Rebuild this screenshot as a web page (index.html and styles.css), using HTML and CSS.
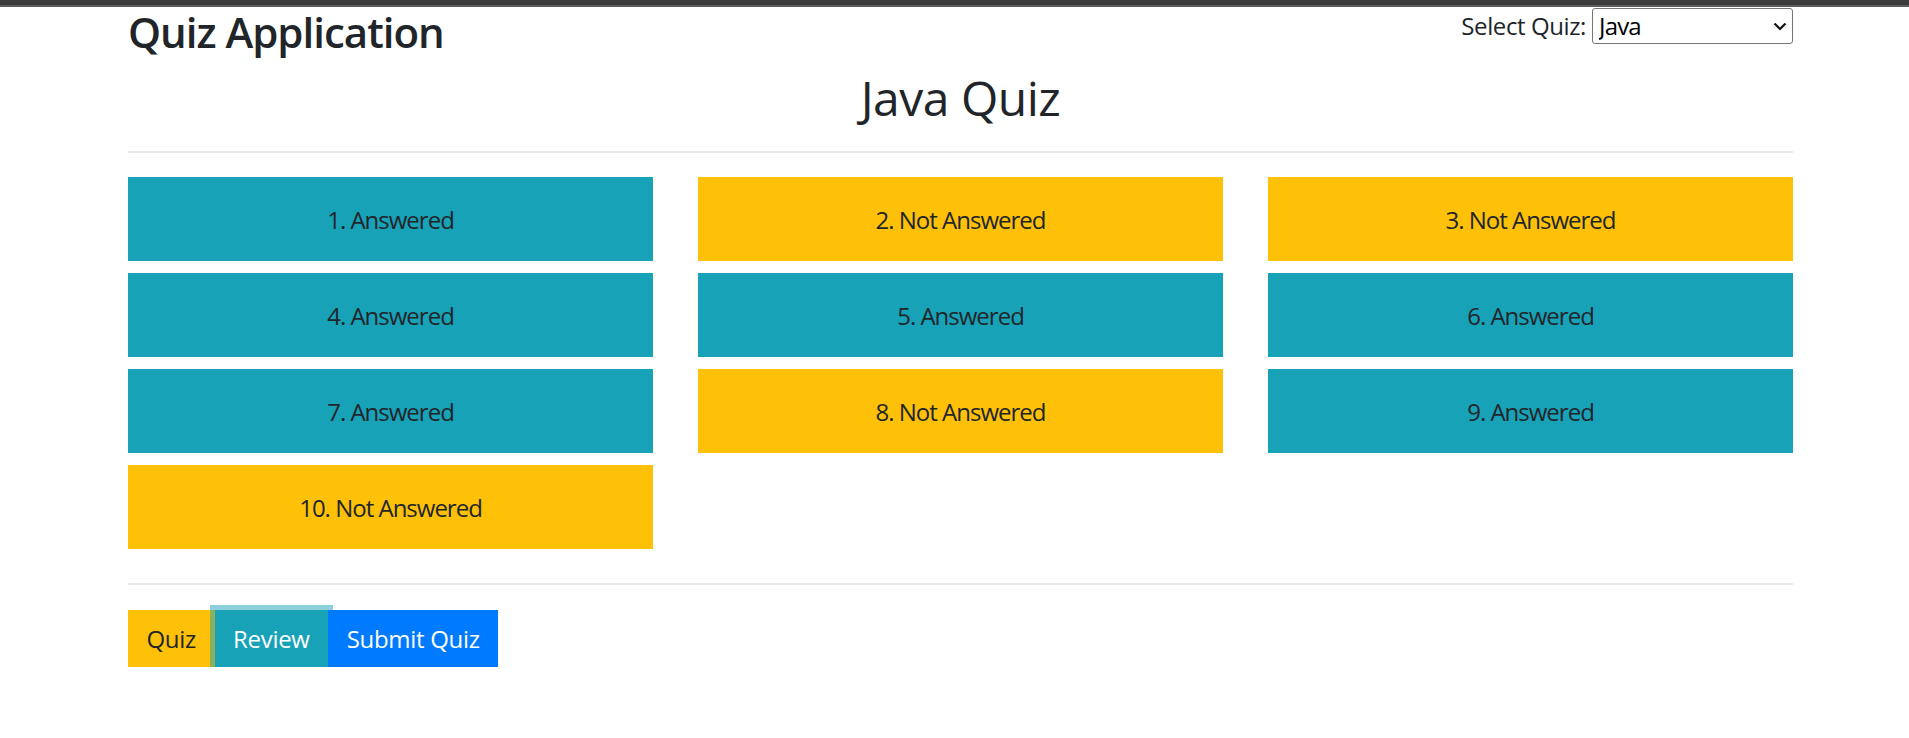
FILE: index.html
```html
<!DOCTYPE html>
<html lang="en">
<head>
<meta charset="utf-8">
<title>Quiz Application</title>
<link rel="stylesheet" href="styles.css">
</head>
<body>
<div class="topbar"></div>
<div class="container">
  <header class="header">
    <h3 class="app-title">Quiz Application</h3>
    <div class="quiz-select">
      <label class="select-label" for="quiz">Select Quiz:</label>
      <div class="select-wrap">
        <select id="quiz" class="select">
          <option>Java</option>
          <option>Python</option>
          <option>JavaScript</option>
        </select>
        <svg class="chevron" width="14" height="9" viewBox="0 0 14 9"><path d="M1.5 1.5 L7 7 L12.5 1.5" fill="none" stroke="#111" stroke-width="2.2"/></svg>
      </div>
    </div>
  </header>

  <h2 class="quiz-title">Java Quiz</h2>
  <hr class="rule">

  <div class="grid">
    <div class="cell answered">1. Answered</div>
    <div class="cell pending">2. Not Answered</div>
    <div class="cell pending">3. Not Answered</div>
    <div class="cell answered">4. Answered</div>
    <div class="cell answered">5. Answered</div>
    <div class="cell answered">6. Answered</div>
    <div class="cell answered">7. Answered</div>
    <div class="cell pending">8. Not Answered</div>
    <div class="cell answered">9. Answered</div>
    <div class="cell pending">10. Not Answered</div>
  </div>

  <hr class="rule rule-bottom">

  <div class="btn-group">
    <button class="btn btn-quiz">Quiz</button>
    <button class="btn btn-review">Review</button>
    <button class="btn btn-submit">Submit Quiz</button>
  </div>
</div>
</body>
</html>
```

FILE: styles.css
```css
* { box-sizing: border-box; }

body {
  margin: 0;
  font-family: "Open Sans", "Noto Sans", sans-serif;
  color: #212529;
  background: #fff;
}

.topbar {
  height: 7px;
  background: linear-gradient(#3b3b3b 0, #3b3b3b 5px, #5c5c5c 5px, #5c5c5c 7px);
}

.container {
  margin-left: 128px;
  width: 1665px;
}

.header {
  display: flex;
  justify-content: space-between;
  align-items: flex-start;
}

.app-title {
  margin: 0;
  font-size: 42px;
  font-weight: 600;
  line-height: 50px;
  letter-spacing: -1px;
}

.quiz-select {
  display: flex;
  align-items: center;
  gap: 6px;
  margin-top: 1px;
}

.select-label {
  font-size: 24px;
  letter-spacing: -0.4px;
  line-height: 36px;
}

.select-wrap {
  position: relative;
  display: flex;
}

.select {
  -webkit-appearance: none;
  appearance: none;
  width: 201px;
  height: 36px;
  border: 1px solid #767676;
  border-radius: 3px;
  background: #fff;
  font-family: "Open Sans", "Noto Sans", sans-serif;
  font-size: 24px;
  letter-spacing: -0.8px;
  color: #000;
  padding: 0 6px;
  line-height: 34px;
}

.chevron {
  position: absolute;
  right: 6px;
  top: 14px;
  pointer-events: none;
}

.quiz-title {
  margin: 12px 0 0;
  font-size: 48px;
  font-weight: 400;
  line-height: 58px;
  text-align: center;
  letter-spacing: -0.5px;
}

.rule {
  margin: 24px 0;
  border: 0;
  height: 2px;
  background: #e8e8e8;
}

.rule-bottom {
  margin: 34px 0 25px;
}

.grid {
  display: grid;
  grid-template-columns: repeat(3, 1fr);
  column-gap: 45px;
  row-gap: 12px;
}

.cell {
  height: 84px;
  display: flex;
  align-items: center;
  justify-content: center;
  font-size: 24px;
  letter-spacing: -1px;
  color: #212529;
}

.answered { background: #17a2b8; }
.pending { background: #ffc107; }

.btn-group {
  display: flex;
}

.btn {
  height: 57px;
  padding: 0 18.5px;
  border: 0;
  border-radius: 0;
  font-family: "Open Sans", "Noto Sans", sans-serif;
  font-size: 24px;
  letter-spacing: -0.3px;
  line-height: 57px;
  position: relative;
}

.btn-quiz {
  background: #ffc107;
  color: #212529;
}

.btn-review {
  background: #17a2b8;
  color: #fff;
  z-index: 1;
  box-shadow: 0 0 0 5px rgba(23, 162, 184, 0.5);
}

.btn-submit {
  background: #007bff;
  color: #fff;
  z-index: 2;
}
```
